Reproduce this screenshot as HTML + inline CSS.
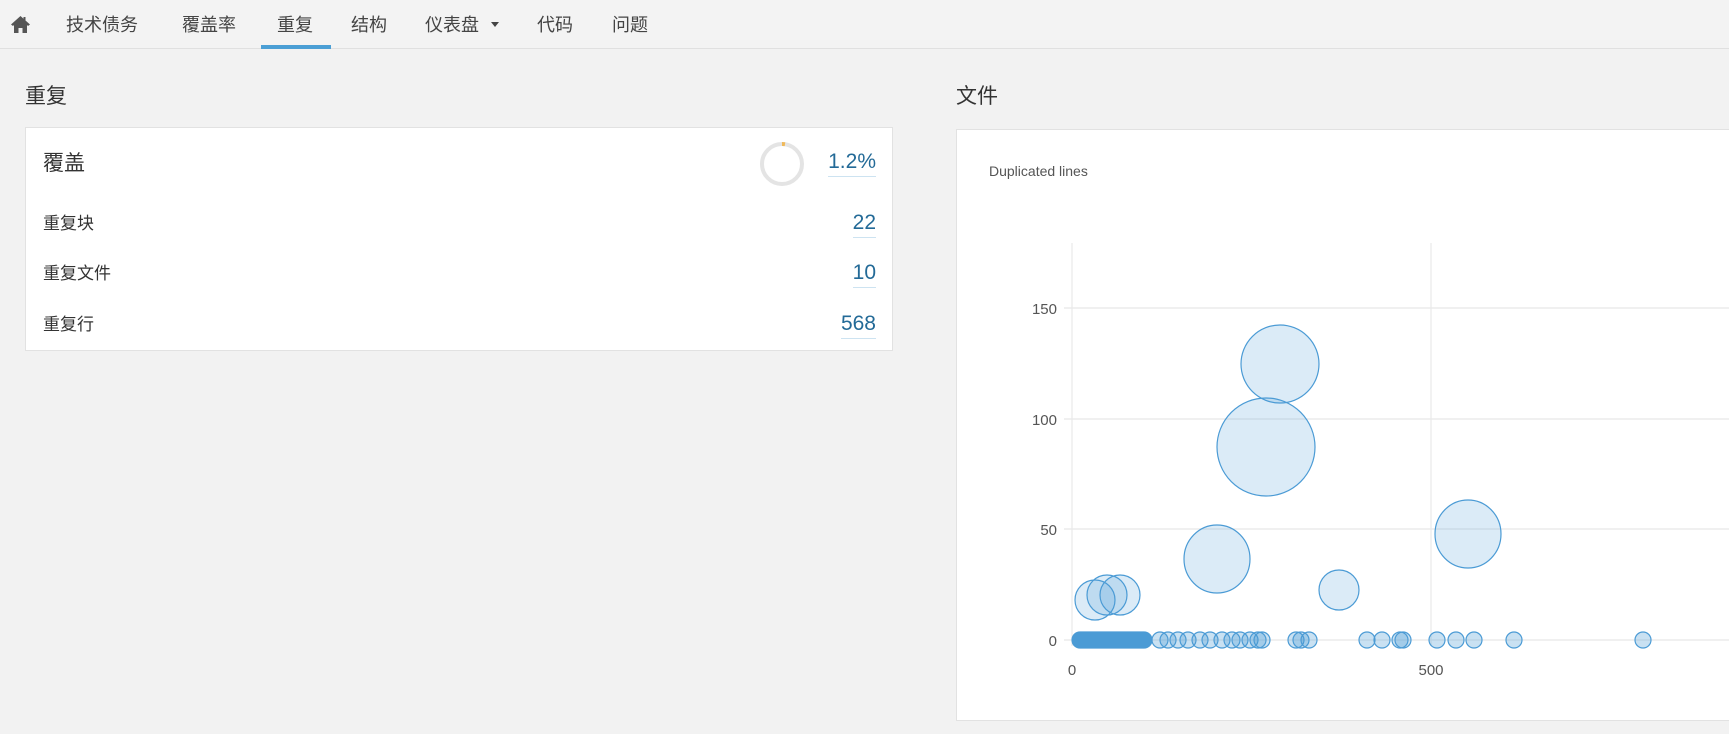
<!DOCTYPE html>
<html><head><meta charset="utf-8"><style>
body{margin:0;width:1729px;height:734px;background:#f2f2f2;overflow:hidden;font-family:"Liberation Sans","Noto Sans CJK SC",sans-serif;color:#333;position:relative}
.a{position:absolute;white-space:nowrap}
.nav{position:absolute;left:0;top:0;width:1729px;height:48px;border-bottom:1px solid #e0e0e0;background:#f3f3f3}
.ni{position:absolute;top:11px;font-size:18px;color:#444}
.card{position:absolute;background:#fff;border:1px solid #e2e2e2}
.v{position:absolute;color:#236a97;border-bottom:1px solid #cde3f1;padding-bottom:2px;font-size:21px}
.lab{position:absolute;font-size:17px;color:#333}
</style></head><body>
<div class="nav">
<svg class="a" style="left:10px;top:15px" width="21" height="18" viewBox="0 0 21 18"><path d="M10.5 1 L1 9.5 L3 11 L4 10 V18 H8.5 V13 H12.5 V18 H17 V10 L18 11 L20 9.5 L15.5 5.5 V2 H13.5 V3.8 Z" fill="#555"/></svg>
<div class="ni" style="left:66px">技术债务</div>
<div class="ni" style="left:182px">覆盖率</div>
<div class="ni" style="left:277px">重复</div>
<div class="a" style="left:261px;top:45px;width:70px;height:4px;background:#4b9fd5"></div>
<div class="ni" style="left:351px">结构</div>
<div class="ni" style="left:425px">仪表盘</div>
<div class="a" style="left:491px;top:22px;width:0;height:0;border-left:4px solid transparent;border-right:4px solid transparent;border-top:5px solid #444"></div>
<div class="ni" style="left:537px">代码</div>
<div class="ni" style="left:612px">问题</div>
</div>
<div class="a" style="left:25px;top:80px;font-size:21px;color:#333">重复</div>
<div class="card" style="left:25px;top:127px;width:866px;height:222px">
<div class="lab" style="left:17px;top:19px;font-size:21px">覆盖</div>
<svg class="a" style="left:732px;top:12px" width="48" height="48"><circle cx="24" cy="24" r="20" fill="none" stroke="#e4e4e4" stroke-width="4"/><path d="M24 4 A20 20 0 0 1 27 4.2" stroke="#f0b95a" stroke-width="4" fill="none"/></svg>
<div class="v" style="right:16px;top:22px">1.2%</div>
<div class="lab" style="left:17px;top:81px">重复块</div>
<div class="v" style="right:16px;top:83px">22</div>
<div class="lab" style="left:17px;top:131px">重复文件</div>
<div class="v" style="right:16px;top:133px">10</div>
<div class="lab" style="left:17px;top:182px">重复行</div>
<div class="v" style="right:16px;top:184px">568</div>
</div>
<div class="a" style="left:956px;top:80px;font-size:21px;color:#333">文件</div>
<div class="card" style="left:956px;top:129px;width:800px;height:590px"></div>
<div class="a" style="left:989px;top:163px;font-size:14px;color:#555">Duplicated lines</div>
<svg class="a" style="left:0;top:0" width="1729" height="734" font-family="Liberation Sans, sans-serif" font-size="15" fill="#555">
<g stroke="#e8e8e8" stroke-width="1.2">
<line x1="1072" y1="243" x2="1072" y2="646"/><line x1="1431" y1="243" x2="1431" y2="646"/>
<line x1="1064" y1="308" x2="1729" y2="308"/><line x1="1064" y1="419" x2="1729" y2="419"/>
<line x1="1064" y1="529" x2="1729" y2="529"/><line x1="1064" y1="640" x2="1729" y2="640"/>
</g>
<g text-anchor="end"><text x="1057" y="314">150</text><text x="1057" y="425">100</text><text x="1057" y="535">50</text><text x="1057" y="646">0</text></g>
<g text-anchor="middle"><text x="1072" y="675">0</text><text x="1431" y="675">500</text></g>
<g fill="rgba(75,155,213,0.2)" stroke="#4b9bd5" stroke-width="1.2">
<ellipse cx="1280" cy="364" rx="39" ry="39"/>
<ellipse cx="1266" cy="447" rx="49" ry="49"/>
<ellipse cx="1217" cy="559" rx="33" ry="34"/>
<ellipse cx="1468" cy="534" rx="33" ry="34"/>
<ellipse cx="1339" cy="590" rx="20" ry="20"/>
<ellipse cx="1095" cy="600" rx="20" ry="20"/>
<ellipse cx="1107" cy="595" rx="20" ry="20"/>
<ellipse cx="1120" cy="595" rx="20" ry="20"/>
</g>
<g fill="rgba(75,155,213,0.3)" stroke="#4b9bd5" stroke-width="1.2">
<rect x="1072" y="632" width="80" height="16" rx="8" fill="#4b9bd5"/>
<circle cx="1160" cy="640" r="8"/><circle cx="1168" cy="640" r="8"/><circle cx="1178" cy="640" r="8"/><circle cx="1188" cy="640" r="8"/>
<circle cx="1200" cy="640" r="8"/><circle cx="1210" cy="640" r="8"/><circle cx="1222" cy="640" r="8"/><circle cx="1232" cy="640" r="8"/>
<circle cx="1240" cy="640" r="8"/><circle cx="1250" cy="640" r="8"/><circle cx="1258" cy="640" r="8"/><circle cx="1262" cy="640" r="8"/>
<circle cx="1296" cy="640" r="8"/><circle cx="1301" cy="640" r="8"/><circle cx="1309" cy="640" r="8"/>
<circle cx="1367" cy="640" r="8"/><circle cx="1382" cy="640" r="8"/><circle cx="1400" cy="640" r="8"/><circle cx="1403" cy="640" r="8"/>
<circle cx="1437" cy="640" r="8"/><circle cx="1456" cy="640" r="8"/><circle cx="1474" cy="640" r="8"/><circle cx="1514" cy="640" r="8"/><circle cx="1643" cy="640" r="8"/>
</g>
</svg>
</body></html>
